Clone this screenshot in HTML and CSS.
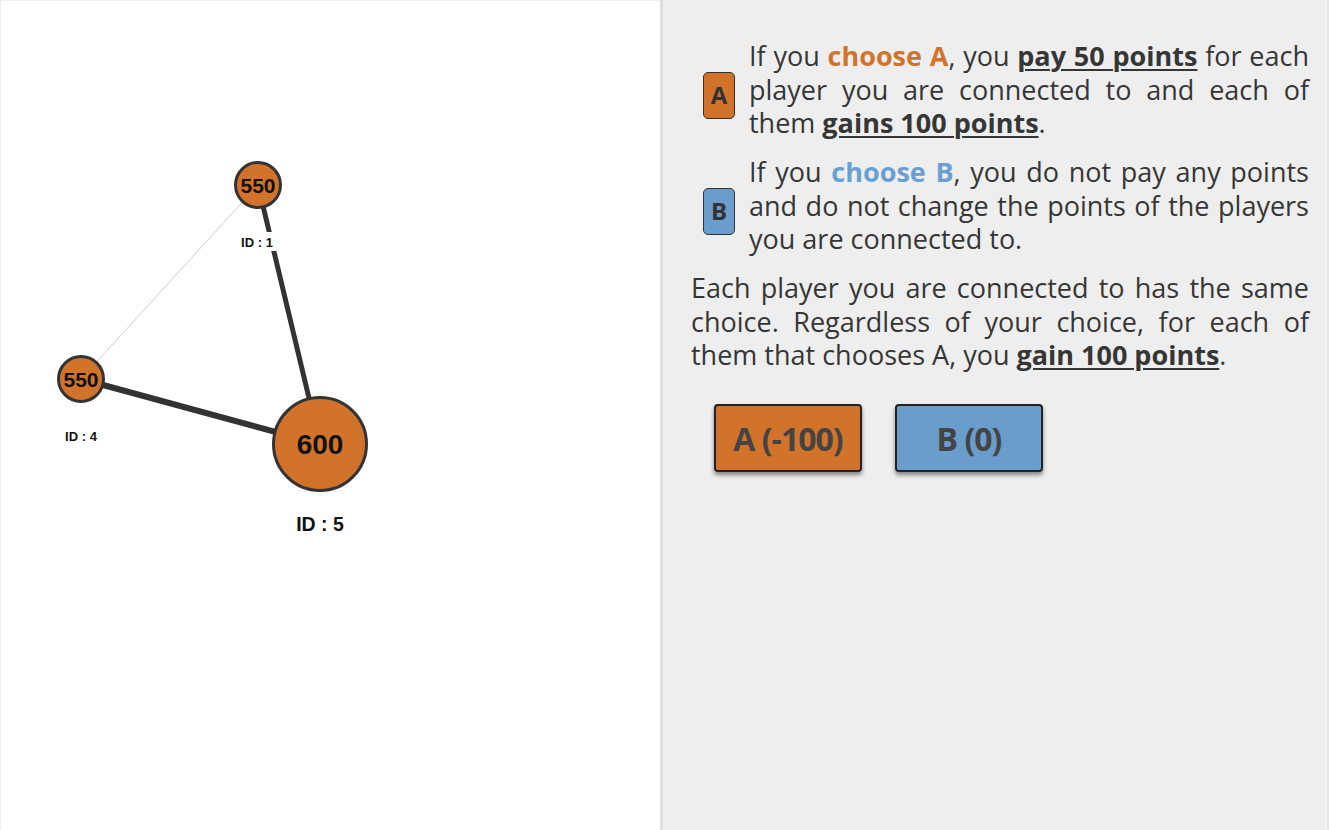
FILE: index.html
```html
<!DOCTYPE html>
<html>
<head>
<meta charset="utf-8">
<link rel="stylesheet" href="styles.css">
</head>
<body>
<div class="app">
  <div class="graph-panel">
    <svg class="graph" width="659" height="829" viewBox="0 0 659 829">
      <line x1="257" y1="184" x2="80" y2="378" class="edge-thin"/>
      <line x1="257" y1="184" x2="319" y2="443" class="edge-thick" stroke-width="5"/>
      <line x1="80" y1="378" x2="319" y2="443" class="edge-thick" stroke-width="6"/>
      <circle cx="257" cy="184" r="22.5" class="node"/>
      <text x="257" y="191.5" class="node-val small">550</text>
      <rect x="237" y="231" width="38" height="19" class="label-bg"/>
      <text x="256" y="246" class="node-id">ID : 1</text>
      <circle cx="80" cy="378" r="22.5" class="node"/>
      <text x="80" y="385.5" class="node-val small">550</text>
      <text x="80" y="440" class="node-id">ID : 4</text>
      <circle cx="319" cy="443" r="46.5" class="node"/>
      <text x="319" y="453" class="node-val big">600</text>
      <text x="319" y="530" class="node-id big-id">ID : 5</text>
    </svg>
  </div>
  <div class="info-panel">
    <div class="rule">
      <span class="badge badge-a">A</span>
      <p class="text">If you <b class="ca">choose A</b>, you <b class="u">pay 50 points</b> for each player you are connected to and each of them <b class="u">gains 100 points</b>.</p>
    </div>
    <div class="rule">
      <span class="badge badge-b">B</span>
      <p class="text">If you <b class="cb">choose B</b>, you do not pay any points and do not change the points of the players you are connected to.</p>
    </div>
    <p class="text">Each player you are connected to has the same choice. Regardless of your choice, for each of them that chooses A, you <b class="u">gain 100 points</b>.</p>
    <div class="buttons">
      <button class="btn btn-a">A (-100)</button>
      <button class="btn btn-b">B (0)</button>
    </div>
  </div>
</div>
</body>
</html>
```
FILE: styles.css
```css
html, body {
  margin: 0;
  padding: 0;
  background: #ffffff;
}
.app {
  display: flex;
  width: 1329px;
  height: 830px;
  overflow: hidden;
  background: #e6e6e6;
}
.graph-panel {
  width: 659px;
  height: 829px;
  background: #ffffff;
  border-top: 1px solid #efefef;
  border-left: 1px solid #efefef;
  flex: none;
}
.graph {
  display: block;
}
.edge-thin {
  stroke: #cfcfcf;
  stroke-width: 1;
}
.edge-thick {
  stroke: #333333;
}
.node {
  fill: #d2732b;
  stroke: #333333;
  stroke-width: 3;
}
.node-val {
  font-family: "Liberation Sans", Arial, sans-serif;
  font-weight: 700;
  text-anchor: middle;
  fill: #111111;
}
.node-val.small { font-size: 21px; }
.node-val.big { font-size: 28px; }
.label-bg { fill: #ffffff; }
.node-id {
  font-family: "Liberation Sans", Arial, sans-serif;
  font-weight: 700;
  font-size: 13px;
  text-anchor: middle;
  fill: #111111;
}
.node-id.big-id { font-size: 19.5px; }

.info-panel {
  flex: 1;
  background: #eeeeee;
  border-left: 3px solid #dedede;
  border-right: 1px solid #f7f7f7;
  margin-right: 2px;
  padding: 39px 17px 0 28px;
  font-family: "Open Sans", "Noto Sans", sans-serif;
  color: #363636;
  font-size: 27px;
  line-height: 33.5px;
}
.text {
  margin: 0 0 15.5px 0;
  text-align: justify;
}
.text b { font-weight: 700; }
.u { text-decoration: underline; text-decoration-thickness: 2px; text-underline-offset: 3px; }
.ca { color: #d2732b; }
.cb { color: #6a9fd2; }
.rule {
  display: flex;
  align-items: center;
  gap: 14px;
  margin-left: 12px;
}
.rule .text { flex: 1; }
.badge {
  flex: none;
  width: 30px;
  height: 45px;
  border: 1.5px solid #333;
  border-radius: 5px;
  display: flex;
  align-items: center;
  justify-content: center;
  font-weight: 700;
  font-size: 24px;
  line-height: 1;
  color: #333;
  margin-top: 12px;
  margin-bottom: 15.5px;
}
.badge-a { background: #d2732b; }
.badge-b { background: #6a9ccc; }
.buttons {
  display: flex;
  gap: 33px;
  margin-top: 32px;
  margin-left: 23px;
}
.btn {
  width: 148px;
  height: 68px;
  border: 2px solid #222;
  border-radius: 4px;
  box-shadow: 0 3px 4px rgba(0,0,0,0.45);
  font-family: "Open Sans", "Noto Sans", sans-serif;
  font-weight: 700;
  font-size: 32px;
  letter-spacing: -1px;
  color: #444;
  padding: 2px 0 0 0;
}
.btn-a { background: #d2732b; }
.btn-b { background: #6a9ccc; }
```
